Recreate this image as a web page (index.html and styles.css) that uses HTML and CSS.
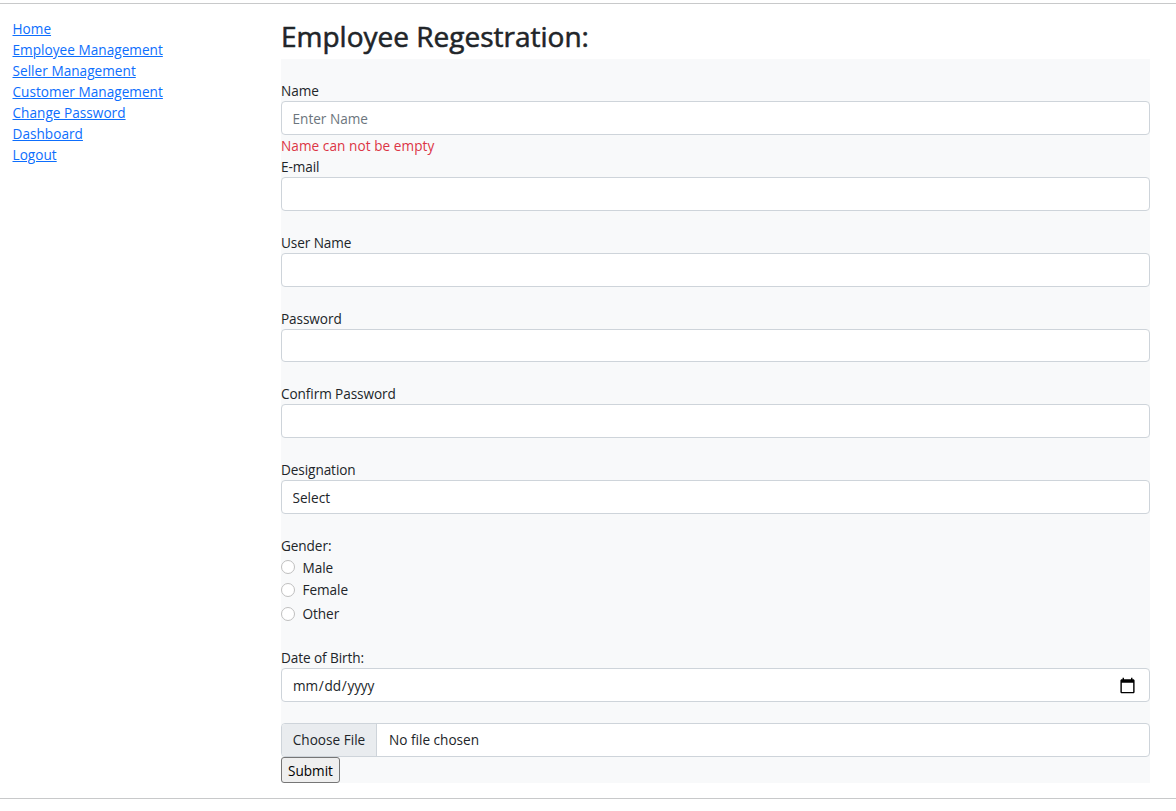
FILE: index.html
```html
<!DOCTYPE html>
<html lang="en">
<head>
<meta charset="utf-8">
<title>Employee Registration</title>
<link rel="stylesheet" href="styles.css">
</head>
<body>
<div class="page">
  <nav class="sidebar">
    <a href="#">Home</a>
    <a href="#">Employee Management</a>
    <a href="#">Seller Management</a>
    <a href="#">Customer Management</a>
    <a href="#">Change Password</a>
    <a href="#">Dashboard</a>
    <a href="#">Logout</a>
  </nav>
  <main class="content">
    <h2 class="title">Employee Regestration:</h2>
    <form class="form">
      <div class="field field-first">
        <label class="label" for="name">Name</label>
        <input class="control" id="name" type="text" placeholder="Enter Name">
        <div class="error">Name can not be empty</div>
      </div>
      <div class="field">
        <label class="label" for="email">E-mail</label>
        <input class="control" id="email" type="text">
      </div>
      <div class="field">
        <label class="label" for="user">User Name</label>
        <input class="control" id="user" type="text">
      </div>
      <div class="field field-short">
        <label class="label" for="pass">Password</label>
        <input class="control" id="pass" type="password">
      </div>
      <div class="field">
        <label class="label" for="confirm">Confirm Password</label>
        <input class="control" id="confirm" type="password">
      </div>
      <div class="field">
        <label class="label" for="designation">Designation</label>
        <select class="control" id="designation"><option>Select</option></select>
      </div>
      <div class="field gender">
        <div class="label">Gender:</div>
        <label class="option option-top"><input class="radio" type="radio" name="gender">Male</label>
        <label class="option"><input class="radio" type="radio" name="gender">Female</label>
        <label class="option option-tall"><input class="radio" type="radio" name="gender">Other</label>
      </div>
      <div class="field">
        <label class="label" for="dob">Date of Birth:</label>
        <input class="control date" id="dob" type="date">
      </div>
      <div class="field field-last">
        <input class="control file" type="file">
      </div>
      <button class="submit" type="button">Submit</button>
    </form>
  </main>
</div>
</body>
</html>
```
FILE: styles.css
```css
* { box-sizing: border-box; }
body {
  margin: 0;
  padding-top: 3px;
  background: #fff;
  color: #212529;
  font: 13.6px/21px "Open Sans", "Noto Sans", sans-serif;
}
.page {
  display: grid;
  grid-template-columns: 281px 869px;
  height: 796px;
  border-top: 1px solid #c8c9ca;
  border-bottom: 1px solid #c8c9ca;
}
.sidebar {
  display: flex;
  flex-direction: column;
  align-items: flex-start;
  padding: 14px 0 0 12.5px;
}
.sidebar a { color: #0d6efd; text-decoration: underline; white-space: nowrap; letter-spacing: 0.03px; }
.title {
  margin: 0;
  padding-top: 15px;
  height: 55px;
  font-size: 28px;
  line-height: 35px;
  font-weight: 500;
  -webkit-text-stroke: 0.55px #212529;
  white-space: nowrap;
}
.form { height: 724px; padding-top: 21px; background: #f8f9fa; }
.field { padding-bottom: 21px; }
.field-first { padding-bottom: 0; }
.label { display: block; height: 21px; letter-spacing: -0.08px; }
.control {
  display: block;
  width: 100%;
  height: 34px;
  margin: 0;
  padding: 0 10.5px;
  border: 1px solid #ced4da;
  border-radius: 4px;
  background: #fff;
  color: #212529;
  font: inherit;
  appearance: none;
}
.field-short .control { height: 33px; }
.control::placeholder { color: #6c757d; opacity: 1; }
.error { height: 21px; color: #dc3545; letter-spacing: 0.06px; }
.option { display: flex; align-items: center; height: 23px; gap: 7.5px; letter-spacing: -0.05px; }
.option-top { height: 22px; }
.option-tall { height: 25px; }
.radio {
  width: 14px;
  height: 14px;
  margin: 0;
  border: 1px solid #bfbfbf;
  border-radius: 50%;
  background: #fff;
  appearance: none;
}
.date { padding: 1px 13px 0 10px; letter-spacing: -0.2px; }
.date::-webkit-calendar-picker-indicator { width: 17px; height: 17px; padding: 0; margin-bottom: 1px; background-size: 17px 17px; }
.file { overflow: hidden; padding-left: 0; line-height: 32px; }
.file::file-selector-button {
  height: 32px;
  width: 95px;
  margin: 0 12px 0 0;
  padding: 0 10px;
  border: 0;
  border-right: 1px solid #ced4da;
  background: #e9ecef;
  color: #212529;
  font: inherit;
}
.field-last { padding-bottom: 0; }
.submit {
  display: block;
  width: 59px;
  height: 26px;
  padding: 0;
  border: 1px solid #767676;
  border-radius: 3px;
  background: #efefef;
  color: #000;
  font: inherit;
}
```
